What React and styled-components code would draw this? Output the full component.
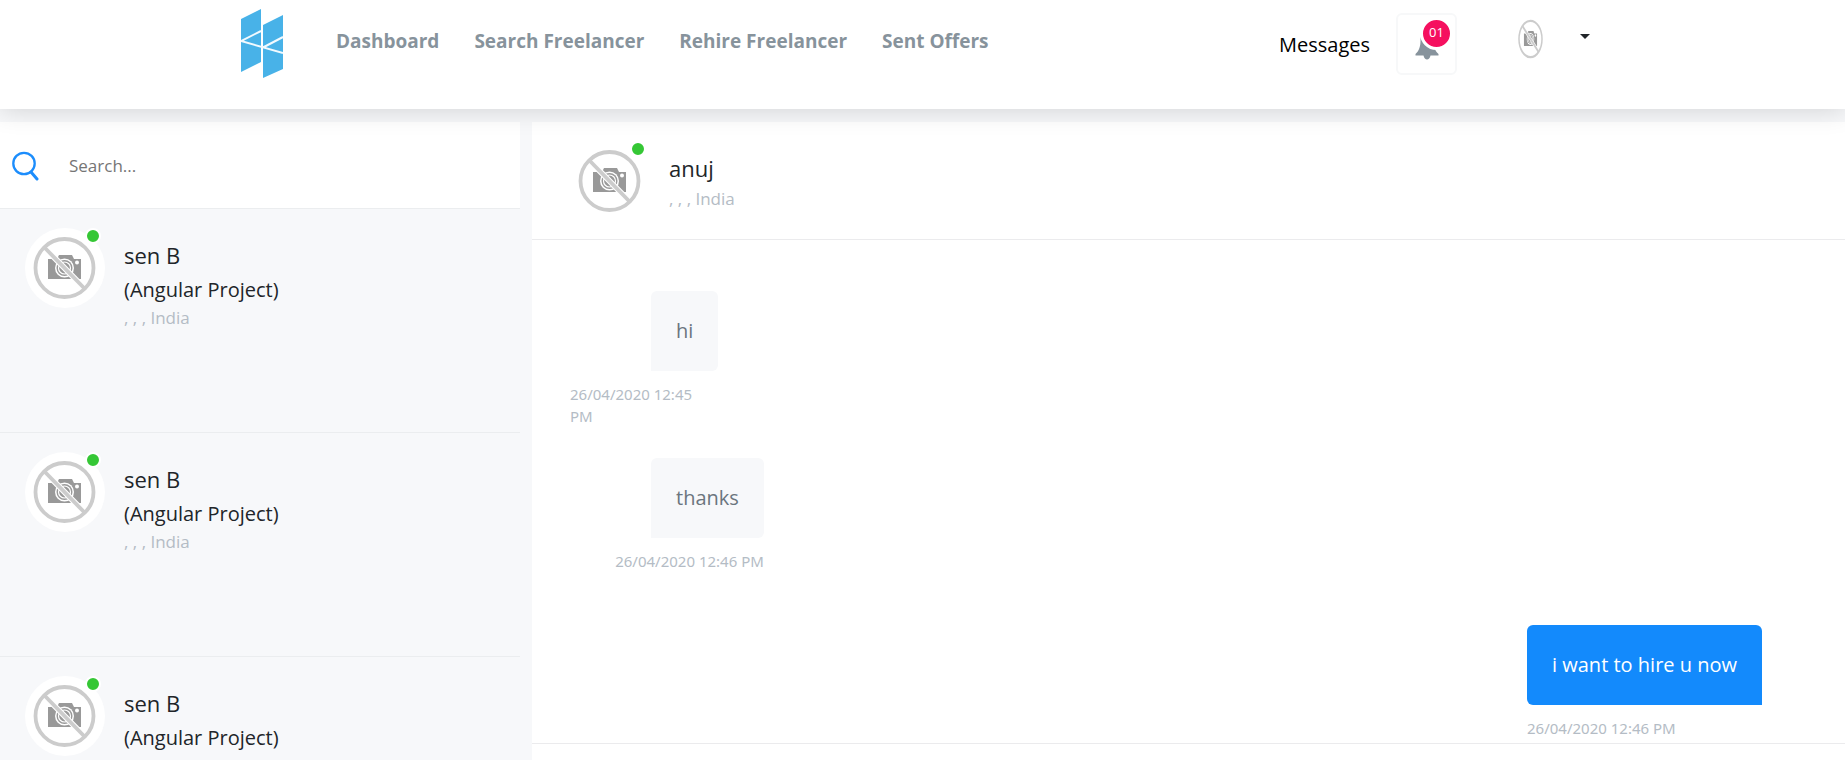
import React from 'react';
import styled, { createGlobalStyle } from 'styled-components';

const GlobalStyle = createGlobalStyle`
  *, *::before, *::after { box-sizing: border-box; }
  body {
    margin: 0;
    background: #f7f8fa;
    color: #212529;
    font: 400 20px/30px "Open Sans", sans-serif;
  }
  h2, h3, p, ul { margin: 0; padding: 0; }
  ul { list-style: none; }
  button, input { font: inherit; color: inherit; border: 0; background: none; padding: 0; }
`;

const Page = styled.div`
  display: flex;
  flex-direction: column;
  height: 100vh;
  overflow: hidden;
`;

const Header = styled.header`
  position: relative;
  z-index: 2;
  flex: none;
  background: #fff;
  box-shadow: 0 0 25px rgba(0, 0, 0, 0.17);
`;

const HeaderInner = styled.div`
  display: flex;
  align-items: flex-start;
  max-width: 1363px;
  min-height: 109px;
  margin: 0 auto;
  padding-top: 9px;
`;

const Logo = styled.a`
  display: block;
  height: 69px;
`;

const Nav = styled.nav`
  display: flex;
  gap: 35px;
  margin-left: 53px;
  padding-top: 17px;
`;

const NavLink = styled.a`
  color: #87939c;
  font-size: 19px;
  font-weight: 700;
  text-decoration: none;
  white-space: nowrap;
`;

const Tools = styled.div`
  display: flex;
  align-items: flex-start;
  margin-left: auto;
`;

const MessagesLink = styled.a`
  margin: 21px 26px 0 0;
  color: #000;
  font-weight: 500;
  text-decoration: none;
`;

const BellButton = styled.button`
  position: relative;
  display: flex;
  align-items: center;
  justify-content: center;
  width: 61px;
  height: 62px;
  margin-top: 4px;
  border: 2px solid #f7f8f9;
  border-radius: 6px;
`;

const Badge = styled.span`
  position: absolute;
  top: 2px;
  right: 2px;
  width: 33px;
  height: 33px;
  border: 3px solid #fff;
  border-radius: 50%;
  background: #f5105f;
  color: #fff;
  font-size: 13px;
  line-height: 25px;
  text-align: center;
`;

const AccountButton = styled.button`
  display: flex;
  align-items: flex-start;
  gap: 37px;
  margin: 10px 0 0 61px;
  padding-right: 14px;
`;

const Caret = styled.span`
  margin-top: 15px;
  border: 5px solid transparent;
  border-top-color: #212529;
  border-bottom: 0;
`;

const Body = styled.main`
  display: grid;
  grid-template-columns: minmax(0, 520fr) minmax(0, 1313fr);
  gap: 12px;
  flex: 1;
  min-height: 0;
  padding-top: 13px;
`;

const Sidebar = styled.aside`
  overflow: hidden;
`;

const SearchBar = styled.label`
  display: flex;
  align-items: center;
  gap: 30px;
  height: 87px;
  padding: 2px 0 0 12px;
  border-bottom: 1px solid #ebedef;
  background: #fff;
`;

const SearchInput = styled.input`
  flex: 1;
  min-width: 0;
  outline: 0;
  font-size: 17px;
  &::placeholder { color: #757575; opacity: 1; }
`;

const Contact = styled.li`
  display: flex;
  gap: 19px;
  min-height: 224px;
  padding: 19px 25px;
  border-bottom: 1px solid #ebedef;
`;

const AvatarFrame = styled.div`
  position: relative;
  flex: none;
  width: 80px;
  height: 80px;
  border-radius: 50%;
  background: #fff;
`;

const OnlineDot = styled.span`
  position: absolute;
  top: 0;
  right: 4px;
  width: 16px;
  height: 16px;
  border: 2px solid #fff;
  border-radius: 50%;
  background: #35c735;
`;

const ContactText = styled.div`
  padding-top: 10px;
`;

const Name = styled.h3`
  margin-bottom: 2px;
  font-size: 22px;
  font-weight: 500;
  line-height: 34px;
`;

const Project = styled.p`
  line-height: 32px;
`;

const Place = styled.p`
  color: #b4bcc5;
  font-size: 17px;
  line-height: 24px;
`;

const Chat = styled.section`
  display: flex;
  flex-direction: column;
  min-height: 0;
  background: #fff;
`;

const ChatHeader = styled.header`
  display: flex;
  gap: 19px;
  height: 118px;
  padding: 19px 38px;
  border-bottom: 1px solid #ebebed;
`;

const Messages = styled.ul`
  flex: 1;
  min-height: 0;
  overflow: hidden;
  padding: 51px 83px 0 38px;
`;

const Row = styled.li`
  display: flex;
  justify-content: ${(p) => (p.$own ? 'flex-end' : 'flex-start')};
  min-height: 167px;
`;

const Message = styled.div`
  display: flex;
  flex-direction: column;
  gap: 12px;
`;

const Bubble = styled.p`
  margin-left: ${(p) => (p.$own ? 0 : 81)}px;
  padding: 25px;
  border-radius: ${(p) => (p.$own ? '6px 6px 0 6px' : '6px 6px 6px 0')};
  background: ${(p) => (p.$own ? '#138afc' : '#f7f8fa')};
  color: ${(p) => (p.$own ? '#fff' : '#6b757e')};
`;

/* Takes its width from the bubble above, so a long stamp wraps under a short message. */
const Stamp = styled.div`
  display: flex;
  justify-content: ${(p) => (p.$own ? 'flex-start' : 'flex-end')};
  width: 0;
  min-width: 100%;
  color: #b4bcc5;
  font-family: "Noto Sans", sans-serif;
  font-size: 15px;
  line-height: 22px;
`;

const Composer = styled.footer`
  flex: none;
  height: 17px;
  border-top: 1px solid #ebebed;
`;

function LogoMark() {
  return (
    <svg width="42" height="69" viewBox="0 0 42 69" aria-hidden="true">
      <path d="M0 10 20 0v53L0 63zM22 16 42 6v54L22 69z" fill="#48b2e8" />
      <path d="M20 22 0 32l42 12M22 38.5 42 28" fill="none" stroke="#f2faff" strokeWidth="2" />
    </svg>
  );
}

function NoPhoto({ compact }) {
  const size = compact ? { width: 25, height: 40, viewBox: '8 8 63 64' } : { width: 80, height: 80, viewBox: '0 0 80 80' };
  return (
    <svg {...size} preserveAspectRatio="none" aria-hidden="true">
      <path d="M23 31h9l2-4h13l2 4h7v20H23z" fill="#999" />
      <circle cx="52" cy="34.500" r="2" fill="#fff" />
      <circle cx="39.500" cy="40" r="9.500" fill="#fff" />
      <circle cx="39.500" cy="40" r="8" fill="#999" />
      <circle cx="39.500" cy="40" r="6" fill="none" stroke="#fff" strokeWidth="1.200" />
      <path d="m19 19 41 42" stroke="#fff" strokeWidth="6" />
      <path d="m19 19 41 42" stroke="#ccc" strokeWidth="3.800" />
      <circle cx="39.500" cy="40" r="29" fill="none" stroke="#ccc" strokeWidth="3.800" />
    </svg>
  );
}

function Avatar() {
  return (
    <AvatarFrame>
      <NoPhoto />
      <OnlineDot />
    </AvatarFrame>
  );
}

function BellIcon() {
  return (
    <svg width="24" height="32" viewBox="0 0 24 32" aria-hidden="true">
      <path d="M12 3c-5 1-6.500 5-6.500 10 0 5-1.500 10-5 13v1.500h8c.5 2.500 2 4 3.500 4s3-1.500 3.500-4h8V26C20 23 18.500 18 18.500 13 18.500 8 17 4 12 3z" fill="#87939c" />
    </svg>
  );
}

function SearchIcon() {
  return (
    <svg width="27" height="30" viewBox="0 0 27 30" fill="none" stroke="#1c8dfc" aria-hidden="true">
      <circle cx="12" cy="12.500" r="10.700" strokeWidth="2.300" />
      <path d="m19 21 6 7" strokeWidth="3" strokeLinecap="round" />
    </svg>
  );
}

const links = ['Dashboard', 'Search Freelancer', 'Rehire Freelancer', 'Sent Offers'];
const contacts = [1, 2, 3].map((id) => ({ id, name: 'sen B', project: '(Angular Project)', place: ', , , India' }));
const messages = [
  { id: 1, text: 'hi', time: '26/04/2020 12:45 PM' },
  { id: 2, text: 'thanks', time: '26/04/2020 12:46 PM' },
  { id: 3, text: 'i want to hire u now', time: '26/04/2020 12:46 PM', own: true },
];

export default function App() {
  return (
    <Page>
      <GlobalStyle />
      <Header>
        <HeaderInner>
          <Logo href="#" aria-label="Home"><LogoMark /></Logo>
          <Nav>
            {links.map((label) => <NavLink key={label} href="#">{label}</NavLink>)}
          </Nav>
          <Tools>
            <MessagesLink href="#">Messages</MessagesLink>
            <BellButton type="button" aria-label="Notifications">
              <BellIcon />
              <Badge>01</Badge>
            </BellButton>
            <AccountButton type="button" aria-label="Account">
              <NoPhoto compact />
              <Caret />
            </AccountButton>
          </Tools>
        </HeaderInner>
      </Header>
      <Body>
        <Sidebar>
          <SearchBar>
            <SearchIcon />
            <SearchInput type="text" placeholder="Search..." aria-label="Search" />
          </SearchBar>
          <ul>
            {contacts.map((c) => (
              <Contact key={c.id}>
                <Avatar />
                <ContactText>
                  <Name>{c.name}</Name>
                  <Project>{c.project}</Project>
                  <Place>{c.place}</Place>
                </ContactText>
              </Contact>
            ))}
          </ul>
        </Sidebar>
        <Chat>
          <ChatHeader>
            <Avatar />
            <ContactText>
              <Name as="h2">anuj</Name>
              <Place>, , , India</Place>
            </ContactText>
          </ChatHeader>
          <Messages>
            {messages.map((m) => (
              <Row key={m.id} $own={m.own}>
                <Message>
                  <Bubble $own={m.own}>{m.text}</Bubble>
                  <Stamp $own={m.own}><time>{m.time}</time></Stamp>
                </Message>
              </Row>
            ))}
          </Messages>
          <Composer />
        </Chat>
      </Body>
    </Page>
  );
}
